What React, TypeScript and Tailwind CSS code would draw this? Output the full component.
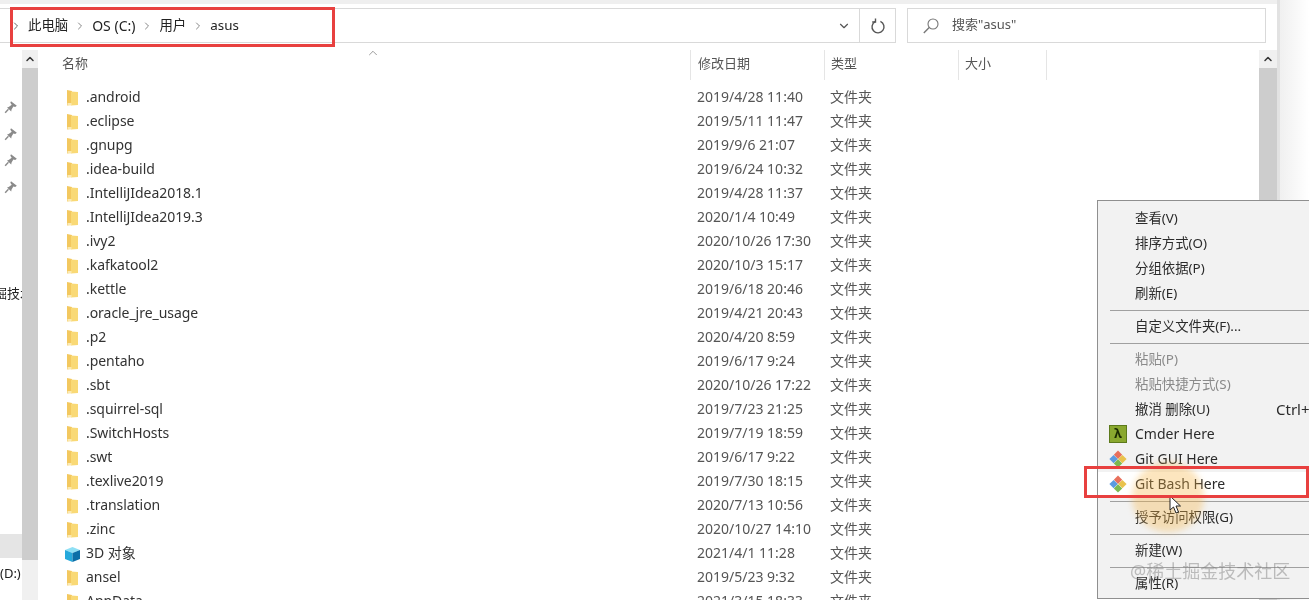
import React from 'react';
import { ChevronRight, ChevronDown, ChevronUp } from 'lucide-react';

const rows: [string, string, string?][] = [
  ['.android', '2019/4/28 11:40'],
  ['.eclipse', '2019/5/11 11:47'],
  ['.gnupg', '2019/9/6 21:07'],
  ['.idea-build', '2019/6/24 10:32'],
  ['.IntelliJIdea2018.1', '2019/4/28 11:37'],
  ['.IntelliJIdea2019.3', '2020/1/4 10:49'],
  ['.ivy2', '2020/10/26 17:30'],
  ['.kafkatool2', '2020/10/3 15:17'],
  ['.kettle', '2019/6/18 20:46'],
  ['.oracle_jre_usage', '2019/4/21 20:43'],
  ['.p2', '2020/4/20 8:59'],
  ['.pentaho', '2019/6/17 9:24'],
  ['.sbt', '2020/10/26 17:22'],
  ['.squirrel-sql', '2019/7/23 21:25'],
  ['.SwitchHosts', '2019/7/19 18:59'],
  ['.swt', '2019/6/17 9:22'],
  ['.texlive2019', '2019/7/30 18:15'],
  ['.translation', '2020/7/13 10:56'],
  ['.zinc', '2020/10/27 14:10'],
  ['3D 对象', '2021/4/1 11:28', 'cube'],
  ['ansel', '2019/5/23 9:32'],
  ['AppData', '2021/3/15 18:33'],
];

const Folder = () => (
  <svg width="13" height="18" viewBox="0 0 13 18" className="shrink-0">
    <path d="M1 1 L6 2 L6 15.5 L1 16.5 Z" fill="#f3c85f" />
    <path d="M5 2.5 L12 3 L12 16 L5 16.5 Z" fill="#f9d976" />
    <path d="M1.5 14 L5.5 14 L5.5 16.5 L1.5 16.5 Z" fill="#fbe9b0" />
  </svg>
);

const Cube = () => (
  <svg width="17" height="17" viewBox="0 0 17 17" className="shrink-0">
    <path d="M8.5 1 L16 4 L8.5 7 L1 4 Z" fill="#8fe0f5" />
    <path d="M1 4 L8.5 7 L8.5 16 L1 13 Z" fill="#25a9dc" />
    <path d="M8.5 7 L16 4 L16 13 L8.5 16 Z" fill="#0b6fa8" />
  </svg>
);

const Pin = () => (
  <svg width="14" height="14" viewBox="0 0 12 12">
    <path d="M6 1 L11 5 L9.6 6 L8 5.6 L6.4 8.4 L6.2 9.8 L2.6 6.4 L4 6 L6.6 4 L5.4 2.4 Z" fill="#8a8a8a" />
    <path d="M3.8 8 L1 11" stroke="#8a8a8a" strokeWidth="1.2" />
  </svg>
);

const GitIcon = () => (
  <svg width="20" height="20" viewBox="0 0 20 20">
    <path d="M10 1.5 L14.2 5.7 L10 9.9 L5.8 5.7 Z" fill="#e8705c" />
    <path d="M5.6 5.9 L9.8 10 L5.6 14.2 L1.4 10 Z" fill="#5b9be0" />
    <path d="M14.4 5.9 L18.6 10 L14.4 14.2 L10.2 10 Z" fill="#e9c24c" />
    <path d="M10 10.2 L14.2 14.4 L10 18.6 L5.8 14.4 Z" fill="#7cb950" />
  </svg>
);

const Refresh = () => (
  <svg width="16" height="18" viewBox="0 0 16 18" fill="none" stroke="#555" strokeWidth="1.4">
    <path d="M10.4 4.4 A6 6 0 1 1 5.2 4.6" />
    <path d="M5.5 1.5 L5.5 5 L2.2 5" />
  </svg>
);

const SearchIcon = () => (
  <svg width="18" height="18" viewBox="0 0 18 18" fill="none" stroke="#777" strokeWidth="1.1" className="ml-[14px] mr-[12px]">
    <circle cx="11" cy="7" r="5" />
    <path d="M7.2 10.6 L1.8 16" strokeWidth="1.4" />
  </svg>
);

const Sep = () => <div className="h-px bg-[#a0a0a0] ml-[12px] my-[3.5px]" />;

const MenuItem = ({ label, disabled, icon, shortcut, latin }: { label: string; disabled?: boolean; icon?: React.ReactNode; shortcut?: string; latin?: boolean }) => (
  <div className={`h-[25px] flex items-center pl-[37px] relative whitespace-nowrap ${latin ? 'text-[14px]' : ''} ${disabled ? 'text-[#8a8a8a]' : 'text-[#2b2b2b]'}`}>
    {icon && <span className="absolute left-[10px] top-[2px] w-[20px] h-[20px] flex items-center justify-center">{icon}</span>}
    <span className={latin ? 'pb-[2px]' : 'pb-[1px]'}>{label}</span>
    {shortcut && <span className="absolute left-[178px] text-[15px]">{shortcut}</span>}
  </div>
);

export default function App() {
  return (
    <div className="relative w-[1309px] h-[600px] overflow-hidden bg-white text-[14px] text-[#3a3a3a] blur-[0.35px] font-['Noto_Sans','Noto_Sans_CJK_SC',sans-serif]">
      <div className="flex h-[600px]">
        <div className="w-[1280px] shrink-0 border-r-[3px] border-[#e2e2e2] flex flex-col">
          <div className="h-[4px] bg-[#efefef]" />
          <div className="h-[4px]" />
          {/* address row */}
          <div className="h-[35px] flex shrink-0">
            <div className="w-[860px] border-y border-[#d9d9d9] border-r flex items-center relative text-[13.4px] text-[#222]">
              <ChevronRight size={12} className="ml-[10px] mr-[6px] text-[#666]" />
              <span className="pb-[1px]">此电脑</span>
              <ChevronRight size={12} className="mx-[6px] text-[#888]" />
              <span className="pb-[1px] text-[14px]">OS (C:)</span>
              <ChevronRight size={12} className="mx-[6px] text-[#888]" />
              <span className="pb-[1px]">用户</span>
              <ChevronRight size={12} className="mx-[6px] text-[#888]" />
              <span className="pb-[1px]">asus</span>
              <ChevronDown size={14} className="absolute left-[837px] text-[#555]" />
            </div>
            <div className="w-[36px] border-y border-r border-[#d9d9d9] flex items-center justify-center">
              <Refresh />
            </div>
            <div className="w-[11px]" />
            <div className="w-[359px] border border-[#d9d9d9] flex items-center text-[#555]">
              <SearchIcon />
              <span className="text-[13px] pb-[1px]">搜索"asus"</span>
            </div>
          </div>
          {/* body */}
          <div className="flex flex-1 min-h-0 mt-[7px]">
            {/* nav */}
            <div className="w-[22px] shrink-0 flex flex-col text-[#222] overflow-hidden">
              <div className="h-[50px] shrink-0" />
              <div className="h-[107px] shrink-0 flex flex-col items-center gap-[12.6px]">
                <Pin /><Pin /><Pin /><Pin />
              </div>
              <div className="h-[76px] shrink-0" />
              <div className="h-[20px] shrink-0 leading-[20px] whitespace-nowrap -ml-[6px] text-[13px]">掘技术</div>
              <div className="h-[231px] shrink-0" />
              <div className="h-[24px] bg-[#e5e5e5] shrink-0" />
              <div className="h-[5px] shrink-0" />
              <div className="h-[20px] leading-[20px] text-[13px] shrink-0 whitespace-nowrap">(D:)</div>
            </div>
            <div className="w-[16px] shrink-0 bg-[#f0f0f0] flex flex-col items-center">
              <div className="h-[18px] flex items-center shrink-0"><ChevronUp size={12} strokeWidth={3} className="text-[#333]" /></div>
              <div className="h-[492px] w-full bg-[#cdcdcd] shrink-0" />
            </div>
            {/* list */}
            <div className="flex-1 min-w-0 relative flex flex-col">
              <div className="h-[30px] flex shrink-0 text-[13px] text-[#555] items-stretch">
                <div className="w-[652px] pl-[24px] flex items-center relative pb-[3px]">
                  名称
                  <ChevronUp size={14} strokeWidth={1.25} className="absolute left-[328px] -top-[4px] text-[#777]" />
                </div>
                <div className="w-[134px] border-l border-[#e5e5e5] pl-[7px] pb-[2px] flex items-center">修改日期</div>
                <div className="w-[134px] border-l border-[#e5e5e5] pl-[6px] pb-[2px] flex items-center">类型</div>
                <div className="w-[89px] border-r border-l border-[#e5e5e5] pl-[6px] pb-[2px] flex items-center">大小</div>
              </div>
              <div className="mt-[6px] flex flex-col">
                {rows.map(([name, date, kind]) => (
                  <div key={name} className="h-[24px] flex items-center shrink-0">
                    <div className="w-[653px] flex items-center pl-[26px] text-[#333]">
                      <span className="w-[17px] flex justify-center mr-[5px]">
                        {kind === 'cube' ? <Cube /> : <Folder />}
                      </span>
                      <span className="whitespace-nowrap pb-[3px] tracking-[-0.05px]">{name}</span>
                    </div>
                    <div className="w-[133px] pl-[6px] text-[#555] whitespace-nowrap pb-[3px]">{date}</div>
                    <div className="pl-[6px] text-[#555] pb-[3px]">文件夹</div>
                  </div>
                ))}
              </div>
            </div>
            <div className="w-[18px] shrink-0 bg-[#f0f0f0] flex flex-col items-center">
              <div className="h-[18px] flex items-center shrink-0"><ChevronUp size={12} strokeWidth={3} className="text-[#333]" /></div>
              <div className="flex-1 w-full bg-[#cdcdcd]" />
            </div>
          </div>
        </div>
        <div className="flex-1 bg-gradient-to-r from-[#f0f0f0] to-white" />
      </div>

      {/* context menu */}
      <div className="absolute left-[1097px] top-[200px] w-[240px] h-[399px] bg-[#f2f2f2] border border-[#8f8f8f] pt-[5px] text-[13.4px]">
        <MenuItem label="查看(V)" />
        <MenuItem label="排序方式(O)" />
        <MenuItem label="分组依据(P)" />
        <MenuItem label="刷新(E)" />
        <Sep />
        <MenuItem label="自定义文件夹(F)..." />
        <Sep />
        <MenuItem label="粘贴(P)" disabled />
        <MenuItem label="粘贴快捷方式(S)" disabled />
        <MenuItem label="撤消 删除(U)" shortcut="Ctrl+Z" />
        <MenuItem
          latin
          label="Cmder Here"
          icon={<span className="w-[18px] h-[18px] bg-[#8aa82f] border border-[#5d7a1c] flex items-center justify-center text-[13px] font-bold text-[#1b2b00]">λ</span>}
        />
        <MenuItem latin label="Git GUI Here" icon={<GitIcon />} />
        <div className="bg-white"><MenuItem latin label="Git Bash Here" icon={<GitIcon />} /></div>
        <Sep />
        <MenuItem label="授予访问权限(G)" />
        <Sep />
        <MenuItem label="新建(W)" />
        <Sep />
        <MenuItem label="属性(R)" />
      </div>

      {/* click highlight */}
      <div className="absolute left-[1132px] top-[462px] w-[72px] h-[70px] rounded-full bg-[#f6b545]/35 blur-[3px]" />

      {/* cursor */}
      <svg width="14" height="20" viewBox="0 0 14 20" className="absolute left-[1169px] top-[495px]">
        <path d="M1 1 L1 15 L4.5 12 L7 18 L9.5 17 L7 11 L11.5 11 Z" fill="#fff" stroke="#222" strokeWidth="1" />
      </svg>

      {/* red annotation boxes */}
      <div className="absolute left-[10px] top-[7px] w-[325px] h-[40px] border-[3px] border-[#e8403f]" />
      <div className="absolute left-[1084px] top-[466px] w-[225px] h-[32px] border-[3px] border-[#e8403f]" />

      {/* watermark */}
      <div className="absolute left-[1130px] top-[558px] text-[18px] text-[#777]/45 whitespace-nowrap">@稀土掘金技术社区</div>
    </div>
  );
}
